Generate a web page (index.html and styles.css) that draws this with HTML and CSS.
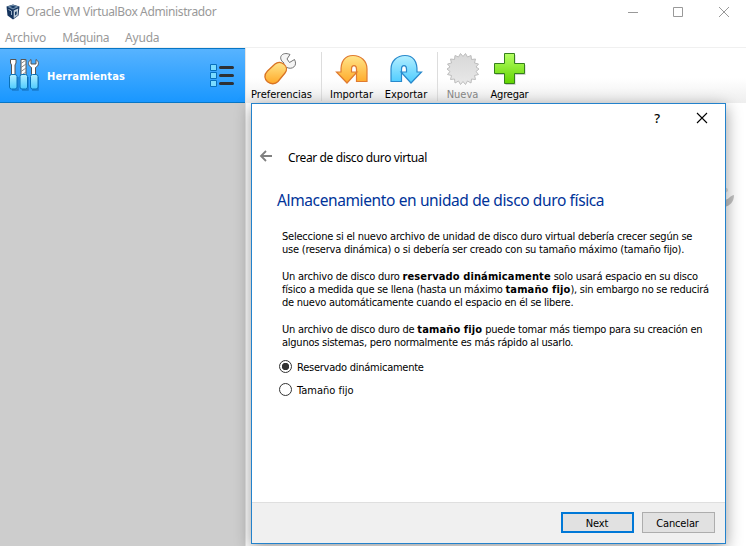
FILE: index.html
```html
<!DOCTYPE html>
<html lang="es">
<head>
<meta charset="utf-8">
<title>Oracle VM VirtualBox Administrador</title>
<link rel="stylesheet" href="styles.css">
</head>
<body>
<svg width="0" height="0" class="defs" aria-hidden="true">
  <defs>
    <linearGradient id="orange" x1="0" y1="0" x2="0" y2="1"><stop offset="0" stop-color="#ffe58a"/><stop offset="1" stop-color="#ffa928"/></linearGradient>
    <linearGradient id="blue" x1="0" y1="0" x2="0" y2="1"><stop offset="0" stop-color="#b4efff"/><stop offset="1" stop-color="#4ccbff"/></linearGradient>
    <linearGradient id="green" x1="0" y1="0" x2="0" y2="1"><stop offset="0" stop-color="#b5ff64"/><stop offset="1" stop-color="#62d400"/></linearGradient>
    <linearGradient id="gray" x1="0" y1="0" x2="0" y2="1"><stop offset="0" stop-color="#d8d8d8"/><stop offset="1" stop-color="#e8e8e8"/></linearGradient>
  </defs>
</svg>
<div class="window">
  <header class="titlebar">
    <svg class="logo" width="14" height="16" viewBox="0 0 14 16"><path d="M7 .5 13.500 2.500 12.500 11.500 7 15.500 1.500 11.500 .5 2.500z" fill="#15345e"/><path d="M7 .8 12.800 2.800 7 5.500 1.200 2.800z" fill="#7392af"/><path d="M4 2.800 7 1.800 10 2.800 7 4.300z" fill="#173a65"/><path d="M7.700 6.500 12.200 4.500l-.5 6.900L7.700 14.300z" fill="#c1ceda"/><path d="M9 8v3.500l1.700-1.200V7.200z" fill="#163861"/><path d="M2.500 5.500l3 1.500v4" fill="none" stroke="#9db2c8" stroke-width="1"/></svg>
    <span class="caption">Oracle VM VirtualBox Administrador</span>
    <svg class="controls" width="103" height="12" viewBox="0 0 103 12" fill="none" stroke="#999"><path d="M0 6.500h10M45.500 1.500h9v9h-9z"/><path d="M91 1l10 10M101 1 91 11"/></svg>
  </header>
  <nav class="menu"><span class="m1">Archivo</span><span class="m2">Máquina</span><span class="m3">Ayuda</span></nav>
  <div class="body">
    <aside class="sidebar">
      <div class="tools">
        <svg class="kit" width="32" height="34" viewBox="0 0 32 34">
          <path d="M9 19v13H3M19 19v13H13M29 19v13H23" fill="none" stroke="#0b5c9d" stroke-opacity=".5" stroke-width="1.500"/>
          <path d="M1.500 1.500h5.500V5L6 7v11H2.500V7L1.500 5z" fill="#fff" stroke="#555"/>
          <path d="M12 1.500h5V18h-5z" fill="#fff" stroke="#555"/><path d="M12 5.500 17 2M12 9.500 17 6M12 13.500 17 10M12 17.500 17 14" stroke="#888"/>
          <path d="M22 1.500C18.500 3.500 19 8 22.500 9.500V18h4V9.500C30 8 30.500 3.500 27 1.500V6h-5z" fill="#fff" stroke="#555"/>
          <g fill="url(#blue)" stroke="#0870b8"><rect x=".5" y="16.500" width="7.500" height="14.500" rx="2"/><rect x="11" y="16.500" width="7.500" height="14.500" rx="2"/><rect x="21.500" y="16.500" width="7.500" height="14.500" rx="2"/></g>
        </svg>
        <span class="tools-label">Herramientas</span>
        <svg class="list" width="25" height="24" viewBox="0 0 25 24"><g fill="#7bdcff" stroke="#0870bd"><path d="M.5 1.500h6v6h-6zM.5 9.500h6v6h-6zM.5 17.500h6v6h-6z"/></g><path d="M10.500 4.500h12M10.500 12.500h12M10.500 20.500h12" stroke="#2e3136" stroke-width="3" stroke-linecap="round"/></svg>
      </div>
    </aside>
    <main class="content">
      <div class="toolbar">
        <div class="tool pref"><svg width="34" height="34" viewBox="0 0 34 34"><path d="M18.500 14 20 11C13 6 18-1 26 2.500L23 7l2.500 3.500 5-3C34 14 28 18 23 15.500L21 17" fill="#f5f5f5" stroke="#737373"/><path d="M3.500 19 11 12C17 7 26 15 21 21L14 29.500C8 36-4.500 27 3.500 19z" fill="url(#orange)" stroke="#d97323" stroke-width="1.300"/></svg><span>Preferencias</span></div>
        <i class="separator"></i>
        <div class="tool import"><svg width="34" height="34" viewBox="0 0 34 34"><path d="M1.500 20h4.500C5.500 9 10 3.500 18 3.500S32 9 32 17v12.500H21.500V17c0-4.500-5-4.500-5 0v3h5.500L12 31z" fill="url(#orange)" stroke="#e07b30" stroke-width="1.200"/></svg><span>Importar</span></div>
        <div class="tool export"><svg width="34" height="34" viewBox="0 0 34 34"><path d="M32.500 20H28C28.500 9 24 3.500 16 3.500S2 9 2 17v12.500h10.500V17c0-4.500 5-4.500 5 0v3H12l10 11z" fill="url(#blue)" stroke="#2989cc" stroke-width="1.200"/></svg><span>Exportar</span></div>
        <i class="separator"></i>
        <div class="tool new"><svg width="34" height="34" viewBox="-17 -17 34 34"><path d="M0-12.500 2.500-15.500 4.500-12 8-13.500 8.500-9.500 12.500-10 11.500-6 15.500-5 13-2 16 0 13 2.500 15.500 5.500 11.500 6.500 12.500 10.500 8.500 10 8 14 4.500 12 2.500 15.500 0 12.500-2.500 15.500-4.500 12-8 14-8.500 10-12.500 10.500-11.500 6.500-15.500 5.500-13 2.500-16 0-13-2-15.500-5-11.500-6-12.500-10-8.500-9.500-8-13.500-4.500-12-2.500-15.500z" fill="url(#gray)" stroke="#bdbdbd"/></svg><span>Nueva</span></div>
        <div class="tool add"><svg width="34" height="34" viewBox="0 0 34 34"><path d="M12.500 3h10v10h10v10H22.500v10h-10v-10h-10v-10h10z" fill="#ccc"/><path d="M11.500 1.500h10v10h10v10h-10v10h-10v-10h-10v-10h10z" fill="url(#green)" stroke="#35801b"/></svg><span>Agregar</span></div>
      </div>
      <svg class="wallpaper" width="12" height="26" viewBox="0 0 12 26"><path d="M0 4q4-1 4 3L0 10z" fill="#ddd"/><path d="M0 16c5 0 5-4 10-5 0 7-4 11-10 12z" fill="#c4c4c4"/></svg>
    </main>
  </div>
</div>
<section class="dialog">
  <div class="dialog-bar"><span>?</span><svg width="12" height="12" viewBox="0 0 12 12"><path d="M1 1l10 10M11 1 1 11" stroke="#000" stroke-width="1.100"/></svg></div>
  <div class="crumb"><svg width="13" height="12" viewBox="0 0 13 12" fill="none" stroke="#808080" stroke-width="1.800"><path d="M12 6H1M6 1 1 6l5 5"/></svg><span>Crear de disco duro virtual</span></div>
  <div class="page">
    <h1>Almacenamiento en unidad de disco duro física</h1>
    <p><span class="l1">Seleccione si el nuevo archivo de unidad de disco duro virtual debería crecer según se</span><span class="l2">use (reserva dinámica) o si debería ser creado con su tamaño máximo (tamaño fijo).</span></p>
    <p><span class="l3">Un archivo de disco duro <b>reservado dinámicamente</b> solo usará espacio en su disco</span><span class="l4">físico a medida que se llena (hasta un máximo <b>tamaño fijo</b>), sin embargo no se reducirá</span><span class="l5">de nuevo automáticamente cuando el espacio en él se libere.</span></p>
    <p><span class="l6">Un archivo de disco duro de <b>tamaño fijo</b> puede tomar más tiempo para su creación en</span><span class="l7">algunos sistemas, pero normalmente es más rápido al usarlo.</span></p>
    <label class="choice"><i class="radio checked"></i><span class="c1">Reservado dinámicamente</span></label>
    <label class="choice"><i class="radio"></i><span class="c2">Tamaño fijo</span></label>
  </div>
  <footer><button class="primary">Next</button><button>Cancelar</button></footer>
</section>
</body>
</html>
```
FILE: styles.css
```css
* { box-sizing: border-box; }
body { margin: 0; width: 746px; height: 546px; overflow: hidden; background: #fff; color: #000; font: 11px/13px "DejaVu Sans Condensed", "DejaVu Sans", sans-serif; }
.defs { position: absolute; }
svg { display: block; flex: none; overflow: visible; }
.window { height: 546px; display: flex; flex-direction: column; }
.titlebar { height: 25px; display: flex; align-items: center; padding: 0 15px 1px 6px; color: #999; font: 12px/16px "Noto Sans", sans-serif; }
.caption { margin-left: 6px; white-space: nowrap; letter-spacing: -.37px; }
.controls { margin-left: auto; }
.menu { height: 23px; display: flex; gap: 16px; padding: 4px 5px 0; color: #999; font: 12px/17px "Noto Sans", sans-serif; border-bottom: 1px solid #f0f0f0; }
.m1 { letter-spacing: -.12px; }
.m2 { letter-spacing: -.4px; }
.m3 { letter-spacing: -.2px; }
.body { flex: 1; display: flex; }
.sidebar { width: 246px; background: #cdcdcd; border-right: 1px solid #e5e5e5; }
.tools { width: 245px; height: 55px; display: flex; align-items: center; padding: 0 10px 0 9px; border: solid #0876c4; border-width: 1px 0; background: linear-gradient(#57b3ff, #1997ff); }
.tools-label { margin: 1px 0 0 6px; font-weight: bold; color: #fff; letter-spacing: .15px; }
.kit { margin-top: -1px; }
.list { margin: -2px 0 0 auto; }
.content { flex: 1; display: flex; flex-direction: column; }
.toolbar { height: 55px; display: flex; padding: 4px 0 0 1px; background: linear-gradient(#fff 55%, #eee); }
.tool { display: flex; flex-direction: column; align-items: center; white-space: nowrap; }
.pref { width: 69px; margin-right: 2px; }
.pref svg { margin-left: -1px; }
.import { width: 53px; }
.export { width: 56px; }
.new { width: 43px; color: #888; }
.add { width: 51px; letter-spacing: -.2px; }
.separator { width: 1px; height: 49px; margin: 0 3px; background: #ddd; }
.tool span { margin-top: 2px; }
.wallpaper { align-self: flex-end; margin: 81px 10px 0 0; }
.dialog { position: absolute; left: 251px; top: 103px; width: 475px; height: 441px; display: flex; flex-direction: column; border: 1px solid #2382cc; background: #fff; box-shadow: 0 4px 15px rgba(0,0,0,.4); }
.dialog-bar { height: 27px; display: flex; justify-content: flex-end; align-items: center; gap: 36px; padding-right: 17px; font: 500 13px/16px "Noto Sans", sans-serif; }
.crumb { height: 52px; display: flex; align-items: center; padding: 2px 0 0 8px; font: 12px/16px "Noto Sans", sans-serif; }
.crumb svg { margin-top: -4px; }
.crumb span { margin: 0 0 0 15px; letter-spacing: -.38px; }
.page { flex: 1; padding: 6px 0 0 25px; }
h1 { margin: 0 0 19px; font: 15.5px/22px "Noto Sans", sans-serif; color: #039; white-space: nowrap; letter-spacing: -.38px; }
p { margin: 0 0 14px 5px; letter-spacing: -.22px; }
p span { display: block; width: max-content; white-space: nowrap; line-height: 13px; }
b { letter-spacing: .12px; }
.l4 { letter-spacing: -.245px; }
.l5, .l7 { letter-spacing: -.245px; }
.choice { display: flex; align-items: center; height: 13px; margin: 10px 0 0 2px; gap: 5px; }
.choice:first-of-type { margin-top: -3px; }
.c1 { letter-spacing: -.25px; }
.radio { width: 13px; height: 13px; border: 1px solid #333; border-radius: 50%; background: #fff; }
.checked { background: radial-gradient(circle, #333 0 3.4px, #fff 4px); }
.c1, .c2 { padding-top: 1px; }
footer { height: 41px; display: flex; justify-content: flex-end; gap: 8px; padding: 10px 10px 9px; background: #f0f0f0; border-top: 1px solid #dfdfdf; }
button { width: 73px; height: 21px; margin-top: -1px; padding: 1px 2px 0 0; border: 1px solid #adadad; border-radius: 0; background: #e1e1e1; font: inherit; color: #000; letter-spacing: -.15px; }
.primary { border: 2px solid #0078d7; padding-right: 1px; }
```
